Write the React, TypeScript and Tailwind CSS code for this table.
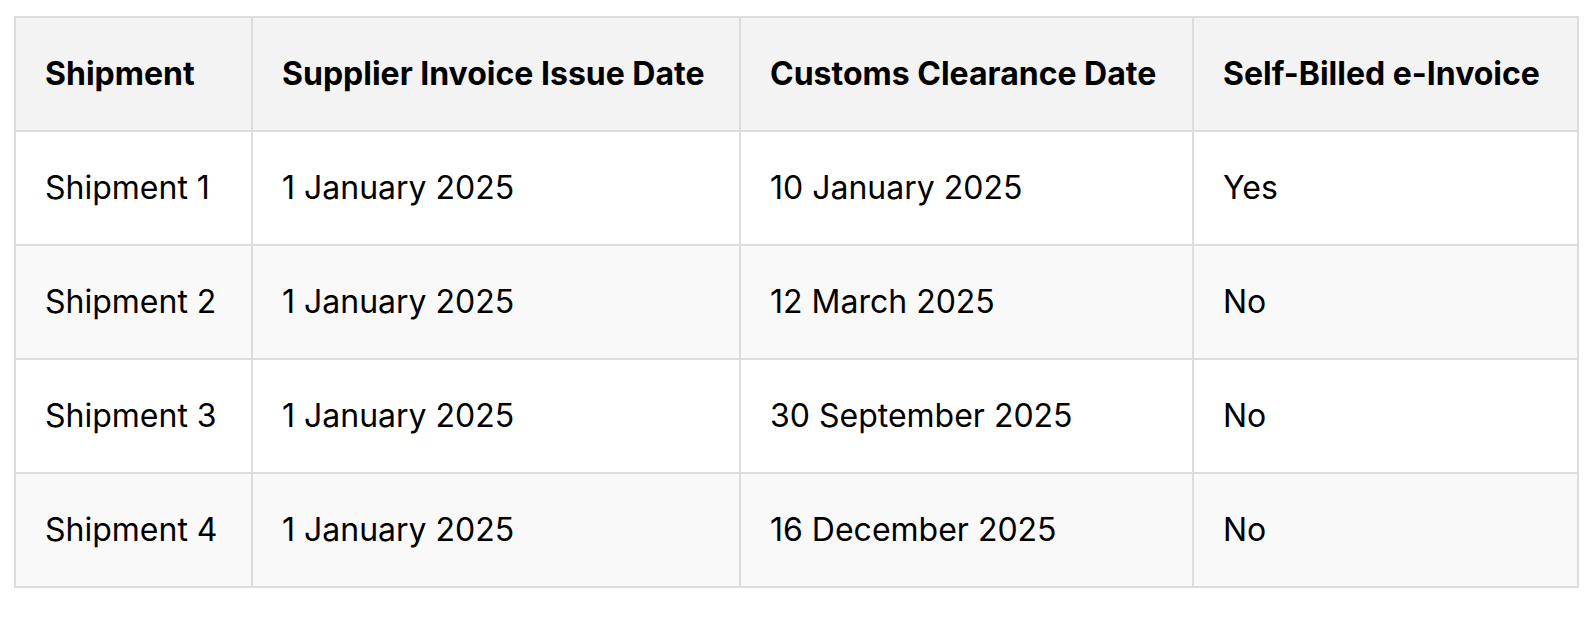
const rows = [
  ["Shipment 1", "1 January 2025", "10 January 2025", "Yes"],
  ["Shipment 2", "1 January 2025", "12 March 2025", "No"],
  ["Shipment 3", "1 January 2025", "30 September 2025", "No"],
  ["Shipment 4", "1 January 2025", "16 December 2025", "No"],
];

const headers = ["Shipment", "Supplier Invoice Issue Date", "Customs Clearance Date", "Self-Billed e-Invoice"];

export default function App() {
  return (
    <div className="min-h-screen bg-white pt-[16px] pl-[14px]" style={{ fontFamily: "Inter, 'Noto Sans', sans-serif" }}>
      <table className="table-fixed border-collapse w-[1563px] text-[32px] leading-[48px] text-black">
        <colgroup>
          <col className="w-[237px]" />
          <col className="w-[488px]" />
          <col className="w-[453px]" />
          <col className="w-[385px]" />
        </colgroup>
        <thead>
          <tr className="bg-[#f3f3f3]">
            {headers.map((h) => (
              <th key={h} className="border-2 border-[#dddddd] px-[29px] py-[32px] text-left font-bold">
                {h}
              </th>
            ))}
          </tr>
        </thead>
        <tbody>
          {rows.map((r, i) => (
            <tr key={i} className={i % 2 === 1 ? "bg-[#f9f9f9]" : "bg-white"}>
              {r.map((c, j) => (
                <td key={j} className="border-2 border-[#dddddd] px-[29px] py-[32px]">
                  {c}
                </td>
              ))}
            </tr>
          ))}
        </tbody>
      </table>
    </div>
  );
}
